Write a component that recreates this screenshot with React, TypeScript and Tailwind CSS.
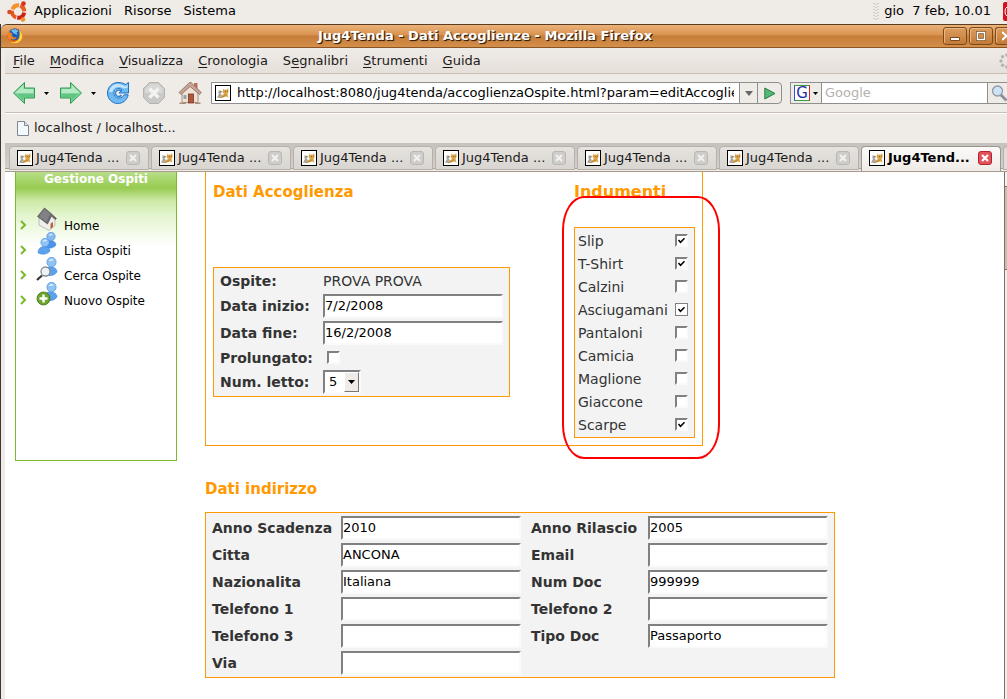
import React, { useState } from 'react';

const navItems = [
  { label: 'Home', icon: 'home' },
  { label: 'Lista Ospiti', icon: 'list' },
  { label: 'Cerca Ospite', icon: 'search' },
  { label: 'Nuovo Ospite', icon: 'add' },
];

const clothes = [
  { name: 'Slip', checked: true },
  { name: 'T-Shirt', checked: true },
  { name: 'Calzini', checked: false },
  { name: 'Asciugamani', checked: true, last: true },
  { name: 'Pantaloni', checked: false },
  { name: 'Camicia', checked: false },
  { name: 'Maglione', checked: false },
  { name: 'Giaccone', checked: false },
  { name: 'Scarpe', checked: true },
];

const addressRows = [
  [{ label: 'Anno Scadenza', value: '2010' }, { label: 'Anno Rilascio', value: '2005' }],
  [{ label: 'Citta', value: 'ANCONA' }, { label: 'Email', value: '' }],
  [{ label: 'Nazionalita', value: 'Italiana' }, { label: 'Num Doc', value: '999999' }],
  [{ label: 'Telefono 1', value: '' }, { label: 'Telefono 2', value: '' }],
  [{ label: 'Telefono 3', value: '' }, { label: 'Tipo Doc', value: 'Passaporto' }],
  [{ label: 'Via', value: '' }],
];

const menus = [
  { pre: '', key: 'F', rest: 'ile' },
  { pre: '', key: 'M', rest: 'odifica' },
  { pre: '', key: 'V', rest: 'isualizza' },
  { pre: '', key: 'C', rest: 'ronologia' },
  { pre: 'S', key: 'e', rest: 'gnalibri' },
  { pre: '', key: 'S', rest: 'trumenti' },
  { pre: '', key: 'G', rest: 'uida' },
];

const UbuntuLogo = () => (
  <svg width="21" height="21" viewBox="0 0 21 21" className="shrink-0">
    <g fill="none" strokeWidth="4">
      <path d="M5.5 8.400A6.200 6.200 0 0 1 12 4.300" stroke="#f5922c" />
      <path d="M13.200 4.700A6.200 6.200 0 0 1 17.200 10.400" stroke="#e8601f" />
      <path d="M17.200 11.600A6.200 6.200 0 0 1 10.200 16.700" stroke="#cf1f1a" />
      <path d="M9.200 16.400A6.200 6.200 0 0 1 5 9.600" stroke="#e8571f" />
    </g>
    <circle cx="2.400" cy="11" r="2.200" fill="#dd4a22" />
    <circle cx="16.500" cy="2.600" r="2.300" fill="#d8301c" />
    <circle cx="16" cy="18.500" r="2.300" fill="#f0912c" />
  </svg>
);

const FirefoxLogo = () => (
  <svg width="16" height="16" viewBox="0 0 16 16">
    <circle cx="8" cy="8" r="7.6" fill="#d9541c" />
    <circle cx="7.6" cy="6.4" r="5.8" fill="#1f5cb4" />
    <path d="M4 2.400C6 .6 9.400.8 11.500 3L9.500 4.600 10.500 7 7 5.500Z" fill="#6cc0f0" />
    <path d="M12 1.800C15.800 4.600 16.600 9.600 13.800 12.800 11 16 5.400 16.200 2.600 13.400 6 15 10.600 13.600 11.800 10.600 12.800 8 12.900 4.600 12 1.800Z" fill="#fbd23a" />
    <path d="M.6 5C1 4 1.600 3.200 2.200 2.800L3 4.600 5.400 5.400 4.600 7.200 6.600 9.400 9.600 9.200C8.600 11.600 5.600 12 3.600 10.600 3.800 12.600 5.400 13.800 7 14.600 2.600 14.200-.4 9.800.6 5Z" fill="#f08326" />
  </svg>
);

const CatIcon = () => (
  <svg width="16" height="16" viewBox="0 0 16 16" className="shrink-0">
    <rect x=".5" y=".5" width="15" height="15" fill="#fff" stroke="#000" />
    <path d="M2 12.500 4 9 3 7 5.500 5.500 7.500 6.500 5.500 8.500 7 10 4.500 13Z" fill="#a5a5a2" />
    <path d="M8.500 3.500 9.500 4.800 12 4.500 13.300 3 13.500 7 12.500 9 13.500 12.500 11.500 11.500 9 12 4.500 13 6.500 10.500 9 9 7.500 7Z" fill="#dba446" />
    <path d="M5 12.800 9 11.500 11 9.500M3.500 5.500 6 7" fill="none" stroke="#85683c" strokeWidth=".6" />
    <path d="M10 6.500H10.800M12 6.500H12.600" stroke="#5a4020" strokeWidth=".8" />
  </svg>
);

const BackIcon = () => (
  <svg width="24" height="24" viewBox="0 0 24 24">
    <path d="M1.500 12 12.500 1.500V7H22.500V17H12.500V22.500Z" fill="#7fd49b" stroke="#2f9a50" strokeLinejoin="round" />
    <path d="M3 12 11.500 4V8H21.500V12Z" fill="#b6eac4" />
    <path d="M5 13H21.500V16H11.500V20Z" fill="#62c583" />
  </svg>
);

const ForwardIcon = () => (
  <svg width="24" height="24" viewBox="0 0 24 24">
    <path d="M22.500 12 11.500 1.500V7H1.500V17H11.500V22.500Z" fill="#7fd49b" stroke="#2f9a50" strokeLinejoin="round" />
    <path d="M21 12 12.500 4V8H2.500V12Z" fill="#b6eac4" />
    <path d="M19 13H2.500V16H12.500V20Z" fill="#62c583" />
  </svg>
);

const ReloadIcon = () => (
  <svg width="24" height="24" viewBox="0 0 24 24">
    <path
      d="M19.500 3.500 22.500 1.500V12H13L16 8.800C13.500 6.600 9.500 7.200 8.200 10.500 7 14 9.500 17.200 13 17 15.500 16.900 17.300 15.600 18.200 13.800H22.200C21 19.200 16.800 22.500 11.800 22.500 6 22.500 1.500 17.800 1.500 12 1.500 6.200 6.200 1.500 12 1.500 15 1.500 17.600 2.200 19.500 3.500Z"
      fill="#6db9f2"
      stroke="#2473c4"
      strokeLinejoin="round"
    />
    <path d="M3 11C4 5 9 2.500 13.500 3.200 16 3.500 18 4.500 19.200 5.500L21.500 3.500V7L17.500 7.500C13 4.500 7.500 6 6.300 11Z" fill="#c3e4fb" />
    <path d="M15.500 10.500A3.300 3.300 0 1 0 15.500 14" fill="none" stroke="#2a86d8" strokeWidth="1.500" />
  </svg>
);

const StopIcon = () => (
  <svg width="24" height="24" viewBox="0 0 24 24">
    <path d="M7.500 1.500H16.500L22.500 7.500V16.500L16.500 22.500H7.500L1.500 16.500V7.500Z" fill="#c9c9c7" stroke="#b3b3b1" />
    <path d="M8 3H16L21 8V12H3V8Z" fill="#d8d8d6" />
    <path d="M7.500 7.500 16.500 16.500M16.500 7.500 7.500 16.500" stroke="#f4f3f1" strokeWidth="3.400" />
  </svg>
);

const HomeIcon = () => (
  <svg width="24" height="24" viewBox="0 0 24 24">
    <path d="M16 2H19.500V9L16 6Z" fill="#c0705c" />
    <path d="M4 11 12 4 20 11V21.500H4Z" fill="#efe1d5" stroke="#ad9382" />
    <path d="M1 11.500 11.500 1.500H13L23.300 11.500 21.500 13.500 12.200 5.500 3 13.500Z" fill="#c5a598" stroke="#8d6a5b" strokeWidth=".8" />
    <rect x="10.500" y="13" width="5" height="9" fill="#b0563c" stroke="#7d3a28" strokeWidth=".8" />
    <rect x="5.500" y="14" width="3" height="4" fill="#8fa5b4" />
    <path d="M1.500 21.500H8V23H1.500ZM17 21.500H22.500V23H17Z" fill="#a98f7d" />
  </svg>
);

const Person = ({ x, y, dark }: { x: number; y: number; dark?: boolean }) => (
  <g transform={`translate(${x} ${y})`}>
    <path d="M0 15C0 11 2.500 8.500 6 8.500S12 10.500 12 13C10 16 5 17.500 0 15Z" fill={dark ? '#4a93e6' : '#5aa2ee'} stroke="#3c82d4" strokeWidth=".5" />
    <circle cx="7" cy="4.500" r="4.200" fill={dark ? '#83b9f1' : '#8fc3f5'} stroke="#4b8fdb" strokeWidth=".6" />
    <path d="M4.500 3.500C5.200 1.500 8 1.200 9 2.600 8 4 6 3.200 4.500 3.500Z" fill="#d6eafc" />
  </g>
);

const NavIcon = ({ kind }: { kind: string }) => (
  <svg width="22" height="24" viewBox="0 0 22 24" className="ml-[9px] shrink-0">
    {kind === 'home' && (
      <>
        <path d="M3 11V18L13 23.500 19 18.500V11L13 6Z" fill="#f1efed" stroke="#9c9a98" strokeWidth=".6" />
        <path d="M8.500 1 14.500 6 20.500 11.500 19 12.500 15.500 9 11.500 17 1.500 9.500Z" fill="#6c6c70" stroke="#444" strokeWidth=".6" />
        <path d="M8.500 2 14 6.500 10.500 15 3 9.500Z" fill="#818186" />
        <path d="M14.500 16.500 17 15V20L14.500 22Z" fill="#b5673c" />
      </>
    )}
    {kind === 'list' && (
      <>
        <Person x={8} y={0} dark />
        <Person x={2} y={6} />
      </>
    )}
    {kind === 'search' && (
      <>
        <g transform="translate(-1 0) scale(1.100 1.150)"><Person x={8} y={0} /></g>
        <path d="M1 23 6 18.500" stroke="#333" strokeWidth="2.200" />
        <circle cx="9.500" cy="14.500" r="4.500" fill="#eef3f6" stroke="#8a8f92" strokeWidth="1.300" />
      </>
    )}
    {kind === 'add' && (
      <>
        <g transform="translate(-1 0) scale(1.100 1.150)"><Person x={8} y={0} /></g>
        <circle cx="7.500" cy="16.500" r="6.500" fill="#6da52c" stroke="#437014" strokeWidth=".8" />
        <path d="M7.500 12.500V20.500M3.500 16.500H11.500" stroke="#fff" strokeWidth="2.400" />
      </>
    )}
  </svg>
);

const SmallArrow = () => (
  <svg width="5" height="3" viewBox="0 0 5 3">
    <path d="M0 0H5L2.500 3Z" fill="#000" />
  </svg>
);

const fieldClass =
  'h-6 w-[180px] border-2 border-t-[#808080] border-l-[#808080] border-r-[#fafafa] border-b-[#fafafa] bg-white text-[13px] text-black outline-none';

const CheckBox = ({ id, checked, thin }: { id: string; checked: boolean; thin?: boolean }) => (
  <span className="relative grid size-[13px]">
    <input
      id={id}
      type="checkbox"
      defaultChecked={checked}
      className={
        thin
          ? 'peer size-[13px] appearance-none border border-[#808080] bg-white'
          : 'peer size-[13px] appearance-none border-2 border-t-[#808080] border-l-[#808080] border-r-[#fafafa] border-b-[#fafafa] bg-white'
      }
    />
    <svg viewBox="0 0 13 13" className="pointer-events-none absolute inset-0 hidden peer-checked:block">
      <path d="M3.500 6 5.500 8.300 9.500 4.300" fill="none" stroke="#000" strokeWidth="1.500" />
    </svg>
  </span>
);

const Tab = ({ active }: { active?: boolean }) => (
  <div
    className={
      active
        ? 'flex h-[26px] w-[140px] shrink-0 items-start rounded-t border border-b-0 border-[#9a958e] bg-linear-to-b from-[#fbfaf9] to-[#efebe7] pl-[7px] pt-[3px]'
        : 'flex h-6 w-[140px] shrink-0 items-start rounded-t border border-[#b5b0a9] bg-linear-to-b from-[#e6e3df] to-[#d9d5d1] pl-[7px] pt-[3px]'
    }
  >
    <button className="flex items-center gap-[3px] whitespace-nowrap leading-4">
      <CatIcon />
      <span className={active ? 'w-[88px] text-left font-bold text-black' : 'w-[88px] text-left'}>
        {active ? 'Jug4Tend...' : 'Jug4Tenda ...'}
      </span>
    </button>
    <button
      aria-label="Chiudi scheda"
      className={
        active
          ? 'ml-[2px] mt-px grid size-[14px] place-items-center rounded-[3px] border border-[#b3232f] bg-[#e2525b]'
          : 'ml-[2px] mt-px grid size-[14px] place-items-center rounded-[3px] border border-[#b9b7b4] bg-[#cfcdca]'
      }
    >
      <svg width="8" height="8" viewBox="0 0 8 8">
        <path d="M1 1 7 7M7 1 1 7" stroke={active ? '#fff' : '#f2f1ef'} strokeWidth="2.200" />
      </svg>
    </button>
  </div>
);

const DesktopPanel = () => (
  <header className="flex h-6 shrink-0 items-center bg-[#efebe7] pb-[2px] pl-[7px] text-black">
    <UbuntuLogo />
    <nav className="ml-[6px] flex gap-3">
      <button>Applicazioni</button>
      <button>Risorse</button>
      <button>Sistema</button>
    </nav>
    <svg width="6" height="18" viewBox="0 0 6 18" className="ml-auto">
      <path d="M1 1V18M5 1V18" stroke="#b4aea6" strokeWidth="1" strokeDasharray="1 2" />
      <path d="M3 2V18" stroke="#b4aea6" strokeWidth="1" strokeDasharray="1 2" />
    </svg>
    <span className="ml-[5px] whitespace-pre">gio  7 feb, 10.01</span>
    <svg width="4" height="19" viewBox="0 0 4 19" className="ml-3">
      <path d="M4 0H2Q0 0 0 2V17Q0 19 2 19H4Z" fill="#d8101c" />
      <path d="M4 5Q2 6 2 9.500T4 14" fill="none" stroke="#fff" />
    </svg>
  </header>
);

const windowButton =
  'grid h-[18px] place-items-center border border-[#7b4b1d] bg-linear-to-b from-[#dc9d5e] to-[#c27a36] shadow-[inset_1px_1px_0_#e9b786]';

const TitleBar = () => (
  <div className="flex h-6 shrink-0 items-center rounded-tl-md border-y border-t-[#5c3d22] border-b-[#8a5523] bg-[linear-gradient(to_bottom,#eab27a_0%,#d9924f_45%,#c67d37_50%,#d48f4b_100%)] pl-[6px]">
    <FirefoxLogo />
    <h1 className="flex-1 pl-1 text-center text-[13px] font-bold text-white [text-shadow:1px_1px_1px_#3a2410,1px_1px_0_#4a2f16]">
      Jug4Tenda - Dati Accoglienze - Mozilla Firefox
    </h1>
    <div className="flex gap-[2px]">
      <button aria-label="Riduci a icona" className={`${windowButton} w-6 rounded-[3px]`}>
        <svg width="10" height="10" viewBox="0 0 10 10">
          <path d="M.5 6.500H9.500V9.500H.5Z" fill="#fff" stroke="#7b4b1d" />
        </svg>
      </button>
      <button aria-label="Ingrandisci" className={`${windowButton} w-6 rounded-[3px]`}>
        <svg width="10" height="10" viewBox="0 0 10 10">
          <path d="M1.500 1.500H8.500V8.500H1.500Z" fill="none" stroke="#7b4b1d" strokeWidth="3" />
          <path d="M1.500 1.500H8.500V8.500H1.500Z" fill="none" stroke="#fff" strokeWidth="1.500" />
        </svg>
      </button>
      <button aria-label="Chiudi" className={`${windowButton} w-3 justify-end rounded-l-[3px] border-r-0`}>
        <svg width="5" height="10" viewBox="0 0 5 10">
          <path d="M0 1 4.500 5 0 9" fill="none" stroke="#fff" strokeWidth="2" />
        </svg>
      </button>
    </div>
  </div>
);

const Toolbar = () => {
  const [url, setUrl] = useState('http://localhost:8080/jug4tenda/accoglienzaOspite.html?param=editAccoglienza');

  return (
    <div className="flex h-[39px] shrink-0 items-center border-b border-[#cbbfb3] pl-[7px] shadow-[0_1px_0_#fff]">
      <button aria-label="Indietro"><BackIcon /></button>
      <button aria-label="Cronologia indietro" className="ml-2"><SmallArrow /></button>
      <button aria-label="Avanti" className="ml-[10px]"><ForwardIcon /></button>
      <button aria-label="Cronologia avanti" className="ml-2"><SmallArrow /></button>
      <button aria-label="Ricarica" className="ml-[10px]"><ReloadIcon /></button>
      <button aria-label="Ferma" className="ml-3"><StopIcon /></button>
      <button aria-label="Pagina iniziale" className="ml-3"><HomeIcon /></button>
      <div className="ml-[9px] flex h-[22px] min-w-0 flex-1 rounded-r border border-[#8f8f8f] bg-[#efebe7]">
        <div className="flex min-w-0 flex-1 items-center gap-[6px] bg-white pl-[3px] pr-[5px]">
          <CatIcon />
          <input
            aria-label="Indirizzo"
            value={url}
            onChange={(e) => setUrl(e.target.value)}
            className="min-w-0 flex-1 text-[13px] text-black outline-none"
          />
        </div>
        <button aria-label="Mostra indirizzi" className="grid w-[18px] place-items-center border-l border-[#8f8f8f]">
          <svg width="8" height="5" viewBox="0 0 8 5"><path d="M0 0H8L4 5Z" fill="#666" /></svg>
        </button>
        <button aria-label="Vai" className="grid w-[24px] place-items-center border-l border-[#8f8f8f]">
          <svg width="12" height="13" viewBox="0 0 12 13">
            <path d="M.8 1V12L11 6.500Z" fill="#52b874" stroke="#2a7d45" strokeLinejoin="round" />
          </svg>
        </button>
      </div>
      <form className="ml-[8px] flex h-[22px] w-[217px] shrink-0 border border-r-0 border-[#8f8f8f]" onSubmit={(e) => e.preventDefault()}>
        <button type="button" aria-label="Motore di ricerca" className="flex w-[30px] items-center gap-[3px] bg-[#efebe7] pl-[3px]">
          <span className="grid size-4 place-items-center border border-t-[#3c9c3c] border-r-[#d22] border-b-[#3c9c3c] border-l-[#2a52d8] bg-white text-[15px] leading-none text-[#1c2fa8]">
            G
          </span>
          <SmallArrow />
        </button>
        <input
          aria-label="Ricerca"
          placeholder="Google"
          className="min-w-0 flex-1 border-x border-[#8f8f8f] bg-white pl-[3px] text-[13px] outline-none placeholder:text-[#b5b1ac]"
        />
        <button aria-label="Cerca" className="flex w-[19px] items-center overflow-hidden bg-[#efebe7] pl-[3px]">
          <svg width="16" height="17" viewBox="0 0 16 17" className="shrink-0">
            <path d="M9 9 15.500 15.500" stroke="#8b8fa0" strokeWidth="3" />
            <circle cx="6.500" cy="6" r="5" fill="#cfe3f6" stroke="#8f9aa6" strokeWidth="1.300" />
          </svg>
        </button>
      </form>
    </div>
  );
};

const Sidebar = () => (
  <aside className="h-[289px] w-[162px] shrink-0 border border-t-0 border-[#7aba2a] bg-[linear-gradient(to_bottom,#b6de88_0px,#98cb50_16px,#cdeaa8_29px,#e4f5cf_44px,#ffffff_74px)]">
    <h2 className="text-center text-xs leading-[14px] font-bold text-white">Gestione Ospiti</h2>
    <ul className="mt-[18px] pl-1">
      {navItems.map((item) => (
        <li key={item.label} className="h-[25px]">
          <a href="#" className="flex items-center text-xs text-black">
            <svg width="7" height="10" viewBox="0 0 7 10" className="mt-3">
              <path d="M1 1 5 5 1 9" fill="none" stroke="#7aba2a" strokeWidth="2" />
            </svg>
            <NavIcon kind={item.icon} />
            <span className="mt-[14px] pl-[6px] leading-4">{item.label}</span>
          </a>
        </li>
      ))}
    </ul>
  </aside>
);

const AccoglienzaForm = () => (
  <section className="w-[297px]">
    <h2 className="text-[15px] leading-5 font-bold text-[#ff9900]">Dati Accoglienza</h2>
    <table className="mt-[65px] w-full border-separate border-spacing-0 border border-[#ff9900] bg-[#f3f3f3] py-px text-left text-sm leading-5 [&_th]:w-[109px] [&_th]:p-0 [&_th]:pl-[6px] [&_td]:p-0">
      <tbody>
        <tr className="h-[23px]">
          <th>Ospite:</th>
          <td>PROVA PROVA</td>
        </tr>
        <tr className="h-[27px]">
          <th><label htmlFor="inizio">Data inizio:</label></th>
          <td><input id="inizio" defaultValue="7/2/2008" className={`${fieldClass} block`} /></td>
        </tr>
        <tr className="h-[27px]">
          <th><label htmlFor="fine">Data fine:</label></th>
          <td><input id="fine" defaultValue="16/2/2008" className={`${fieldClass} block`} /></td>
        </tr>
        <tr className="h-[23px]">
          <th><label htmlFor="prolungato">Prolungato:</label></th>
          <td className="[&>span]:ml-1"><CheckBox id="prolungato" checked={false} /></td>
        </tr>
        <tr className="h-[26px]">
          <th><label htmlFor="letto">Num. letto:</label></th>
          <td>
            <div className="relative w-[38px]">
              <select
                id="letto"
                defaultValue="5"
                className="block h-6 w-full appearance-none border-2 border-t-[#808080] border-l-[#808080] border-r-[#fafafa] border-b-[#fafafa] bg-white pl-1 text-[13px] text-black"
              >
                {['1', '2', '3', '4', '5', '6'].map((n) => (
                  <option key={n}>{n}</option>
                ))}
              </select>
              <span className="pointer-events-none absolute inset-y-[2px] right-[2px] grid w-[15px] place-items-center border border-t-white border-l-white border-r-[#777] border-b-[#777] bg-[#efebe7]">
                <svg width="7" height="4" viewBox="0 0 7 4"><path d="M0 0H7L3.500 4Z" fill="#000" /></svg>
              </span>
            </div>
          </td>
        </tr>
      </tbody>
    </table>
  </section>
);

const IndumentiForm = () => (
  <section className="relative w-[121px]">
    <h2 className="text-base leading-5 font-bold text-[#ff9900]">Indumenti</h2>
    <table className="mt-[25px] w-full border-separate border-spacing-0 border border-[#ff9900] bg-[#f3f3f3] py-px text-sm leading-5">
      <tbody>
        {clothes.map((item) => (
          <tr key={item.name} className="h-[23px]">
            <td className="p-0 pl-[3px]"><label htmlFor={item.name}>{item.name}</label></td>
            <td className="w-[19px] p-0"><CheckBox id={item.name} checked={item.checked} thin={item.last} /></td>
          </tr>
        ))}
      </tbody>
    </table>
    {/* hand-drawn highlight around the list */}
    <div className="pointer-events-none absolute top-[14px] -right-[25px] -bottom-[21px] -left-3 rounded-[22px/34px] border-2 border-[#ff0000]" />
  </section>
);

const AddressForm = () => (
  <section className="mt-[33px]">
    <h2 className="text-[15px] leading-5 font-bold text-[#ff9900]">Dati indirizzo</h2>
    <table className="mt-[13px] w-[630px] table-fixed border-separate border-spacing-0 border border-[#ff9900] bg-[#f3f3f3] py-px text-left text-sm leading-5">
      <colgroup>
        <col className="w-[135px]" />
        <col className="w-[184px]" />
        <col className="w-[123px]" />
        <col className="w-[186px]" />
      </colgroup>
      <tbody>
        {addressRows.map((row, i) => (
          <tr key={i} className="h-[27px]">
            {row.map((field) => (
              <React.Fragment key={field.label}>
                <th className="p-0 pl-[6px]"><label htmlFor={field.label}>{field.label}</label></th>
                <td className="p-0">
                  <input id={field.label} defaultValue={field.value} className={`${fieldClass} block`} />
                </td>
              </React.Fragment>
            ))}
          </tr>
        ))}
      </tbody>
    </table>
  </section>
);

const App: React.FC = () => {
  return (
    <div className="flex h-screen flex-col overflow-hidden bg-[#efebe7] font-['DejaVu_Sans',sans-serif] text-[13px] leading-4 text-[#1a1a1a]">
      <DesktopPanel />
      <div className="flex min-h-0 flex-1 flex-col border-l border-[#3f3334]">
        <TitleBar />
        <div className="flex min-h-0 flex-1 flex-col pl-1">
          <div className="flex h-[26px] shrink-0 items-center justify-between overflow-hidden border-b border-[#cbbfb3] bg-linear-to-b from-[#efebe7] to-[#e6e0da] pl-2">
            <nav className="flex gap-[15px]">
              {menus.map((menu) => (
                <button key={menu.pre + menu.key + menu.rest}>
                  {menu.pre}
                  <span className="underline underline-offset-2">{menu.key}</span>
                  {menu.rest}
                </button>
              ))}
            </nav>
            <svg width="8" height="16" viewBox="0 0 8 16">
              <g fill="#b5b3b0">
                <circle cx="2" cy="8" r="1.700" />
                <circle cx="3.600" cy="3.800" r="1.700" />
                <circle cx="3.600" cy="12.200" r="1.700" />
                <circle cx="7.800" cy="2" r="1.700" />
                <circle cx="7.800" cy="14" r="1.700" />
              </g>
            </svg>
          </div>
          <Toolbar />
          <div className="flex h-[30px] shrink-0 items-center pl-3">
            <a href="#" className="flex items-center gap-[5px]">
              <svg width="12" height="15" viewBox="0 0 12 15">
                <path d="M.5.5H7.500L11.500 4.500V14.500H.5Z" fill="#f6f9fc" stroke="#7d8894" />
                <path d="M7.500.5V4.500H11.500" fill="#dbe5ee" stroke="#7d8894" />
              </svg>
              localhost / localhost...
            </a>
          </div>
          <div className="flex h-[29px] shrink-0 items-start gap-[2px] overflow-hidden border-b border-[#a89a8e] bg-[linear-gradient(to_bottom,#c6c2be_0px,#d2cecb_25px,#a9a199_25px,#a9a199_26px,#efebe7_26px)] pt-[3px] pl-1">
            <Tab />
            <Tab />
            <Tab />
            <Tab />
            <Tab />
            <Tab />
            <Tab active />
            <div className="h-6 flex-1 rounded-tl border border-r-0 border-[#b5b0a9] bg-[#e0dcd8]" />
          </div>
          <div className="flex min-h-0 flex-1 bg-white">
            <div className="flex min-w-0 flex-1 items-start gap-7 overflow-hidden pl-[10px] text-[#333]">
              <Sidebar />
              <main className="shrink-0">
                <div className="flex w-[498px] justify-between border border-t-0 border-[#ff9900] px-[7px] pt-[10px] pb-[7px]">
                  <AccoglienzaForm />
                  <IndumentiForm />
                </div>
                <AddressForm />
              </main>
            </div>
            <div className="flex w-[3px] shrink-0 flex-col border-l border-[#7d7266] bg-[#efebe7]">
              <div className="h-[14px] bg-[#f6f4f2]" />
              <div className="h-[84px] border-y border-[#7d7266] bg-[#c9bdb1]" />
            </div>
          </div>
        </div>
      </div>
    </div>
  );
};

export default App;
